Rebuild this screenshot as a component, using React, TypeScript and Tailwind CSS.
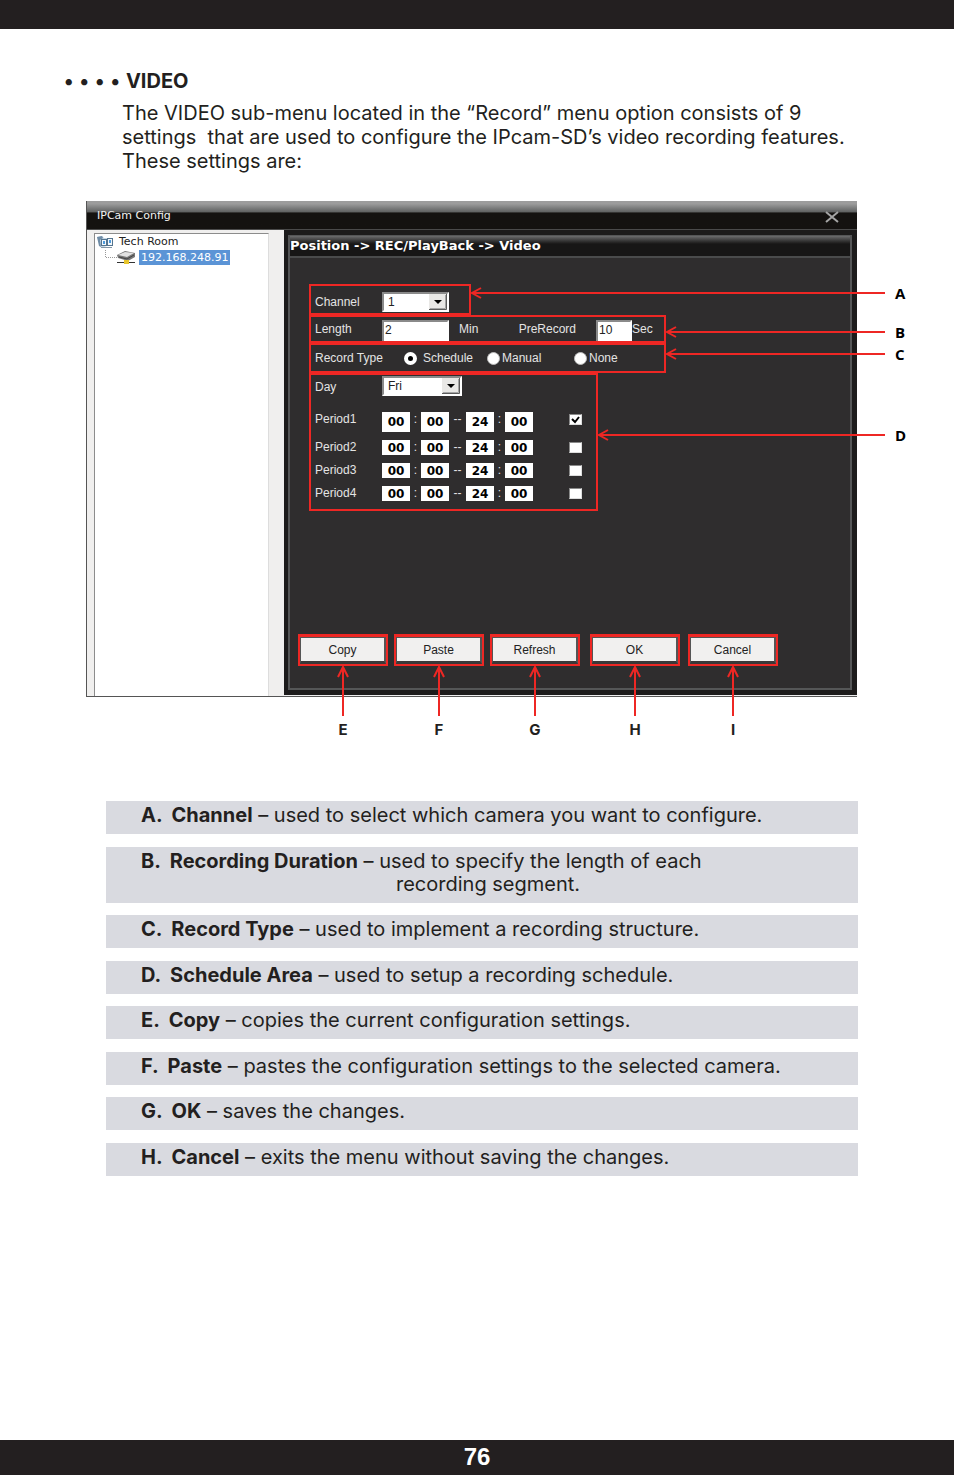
import { ReactNode } from "react";

const periods = [
  { name: "Period1", height: "h-5", checked: true },
  { name: "Period2", height: "h-[15px]", checked: false },
  { name: "Period3", height: "h-[15px]", checked: false },
  { name: "Period4", height: "h-[15px]", checked: false },
];

const legend = [
  {
    title: "A.  Channel",
    text: "used to select which camera you want to configure.",
  },
  {
    title: "B.  Recording Duration",
    text: "used to specify the length of each",
    more: "recording segment.",
  },
  {
    title: "C.  Record Type",
    text: "used to implement a recording structure.",
  },
  {
    title: "D.  Schedule Area",
    text: "used to setup a recording schedule.",
  },
  {
    title: "E.  Copy",
    text: "copies the current configuration settings.",
  },
  {
    title: "F.  Paste",
    text: "pastes the configuration settings to the selected camera.",
  },
  { title: "G.  OK", text: "saves the changes." },
  {
    title: "H.  Cancel",
    text: "exits the menu without saving the changes.",
  },
];

// Horizontal arrow that points back at the box it sits in
function SideCallout({
  letter,
  length,
  className,
}: {
  letter: string;
  length: number;
  className: string;
}) {
  return (
    <div className={`absolute left-full flex items-start gap-2.5 ${className}`}>
      <svg
        width={length}
        height="14"
        className="shrink-0"
        fill="none"
        stroke="#ee2724"
        strokeWidth="2"
      >
        <path d={`M3 7H${length}M12 2L3 7L12 12`} />
      </svg>
      <span className="font-['Open_Sans',sans-serif] text-[15px] leading-[14px] font-bold text-black">
        {letter}
      </span>
    </div>
  );
}

function ActionButton({ label, letter }: { label: string; letter: string }) {
  return (
    <div className="relative w-[90px] border-2 border-t-[3px] border-[#ee2724]">
      <button
        type="button"
        className="block h-[27px] w-full border border-r-2 border-b-[3px] border-[#555] border-b-[#3a3838] bg-[#f1f0ef] text-xs text-[#222]"
      >
        {label}
      </button>
      <div className="absolute top-full left-0 flex w-full flex-col items-center gap-1">
        <svg
          width="14"
          height="52"
          fill="none"
          stroke="#ee2724"
          strokeWidth="2"
        >
          <path d="M7 3V52M2 13L7 3L12 13" />
        </svg>
        <span className="font-[Inter,sans-serif] text-[15px] leading-5 font-bold text-[#231f20]">
          {letter}
        </span>
      </div>
    </div>
  );
}

function Select({
  id,
  value,
  className,
}: {
  id: string;
  value: string;
  className: string;
}) {
  return (
    <div className={`relative h-5 ${className}`}>
      <select
        id={id}
        className="block h-5 w-full appearance-none border-2 border-[#8a8a8a] border-r-white border-b-white bg-white pl-1 text-xs leading-4 text-[#222]"
      >
        <option>{value}</option>
      </select>
      <svg
        width="18"
        height="16"
        className="pointer-events-none absolute top-0.5 right-0.5"
      >
        <rect width="18" height="16" fill="#e9e8e6" />
        <path d="M17.5 0V15.5H0" fill="none" stroke="#5c5c5c" />
        <path d="M16.5 1V14.5H1" fill="none" stroke="#a5a5a5" />
        <path d="M5 6H13L9 10Z" fill="#000" />
      </svg>
    </div>
  );
}

function Radio({ label, checked }: { label: string; checked?: boolean }) {
  return (
    <label className="flex items-center gap-0.5">
      <input
        type="radio"
        name="type"
        defaultChecked={checked}
        className="peer size-[13px] appearance-none rounded-full border border-[#bbb] bg-white checked:border-4 checked:border-white checked:bg-black"
      />
      <span className="peer-checked:pl-1">{label}</span>
    </label>
  );
}

function TimeBox({ label, value }: { label: string; value: string }) {
  return (
    <input
      aria-label={label}
      defaultValue={value}
      className="h-full w-7 bg-white text-center font-['DejaVu_Sans',sans-serif] text-xs leading-4 font-bold text-black"
    />
  );
}

function Box({
  className,
  children,
}: {
  className: string;
  children: ReactNode;
}) {
  return (
    <div className={`relative border-2 border-[#ee2724] pl-1 ${className}`}>
      {children}
    </div>
  );
}

function Sidebar() {
  return (
    <div className="w-[197px] shrink-0 bg-[#f0efee] pt-[3px] pr-[15px] pl-[7px]">
      <div className="h-full border border-b-0 border-[#8c8c8c] border-r-[#ddd] bg-white px-0.5 font-['DejaVu_Sans',sans-serif] text-[11px] text-[#222]">
        <div className="flex h-4 items-center gap-1.5">
          <svg width="16" height="14">
            <path d="M0 2L5 1L7 3H12L13 10L4 13Z" fill="#c5d6e4" />
            <path d="M0 2L5 1L6 3L3 5L4 12L2 11Z" fill="#6f8ca6" />
            <rect x="4.500" y="4.500" width="5" height="6" fill="#f3f8fc" stroke="#55758f" />
            <rect x="10.500" y="3.500" width="5" height="7" fill="#f3f8fc" stroke="#55758f" />
            <path d="M6 6H8V9H6ZM12 5H14V8H12Z" fill="#4d9bdd" />
            <path d="M4 12.500H15" stroke="#8497a6" />
          </svg>
          Tech Room
        </div>
        <div className="flex h-[15px] items-center">
          <svg width="42" height="15">
            <path
              d="M8.500 0V7.500H20"
              fill="none"
              stroke="#999"
              strokeDasharray="1 1"
            />
            <path d="M20 5L28 1L38 3L38 7L31 11L21 8Z" fill="#777" />
            <path d="M21 5L28 2L37 3L30 7Z" fill="#e2e2e2" />
            <path d="M22 7L30 9L37 5" stroke="#444" fill="none" />
            <path d="M20 12.500H38" stroke="#333" />
            <rect x="27" y="10" width="5" height="4" fill="#e7c52c" />
          </svg>
          <span className="bg-[#5b94d6] px-0.5 leading-[15px] text-white">
            192.168.248.91
          </span>
        </div>
      </div>
    </div>
  );
}

function ConfigWindow() {
  return (
    <div className="w-full max-w-[771px] border-b border-l border-[#555] font-['Liberation_Sans',Arial,sans-serif] text-xs">
      <div className="flex h-[29px] items-center justify-between border-b border-[#4a4a4a] bg-linear-to-b from-[#9c9c9c] from-10% via-[#5e6060] via-40% to-[#141210] to-42% pr-[18px] pl-2.5">
        <span className="pt-0.5 font-['DejaVu_Sans',sans-serif] text-[11px] text-[#f2f2f2]">
          IPCam Config
        </span>
        <button type="button" aria-label="Close" className="pt-1">
          <svg width="14" height="12" stroke="#a5a5a5" strokeWidth="2">
            <path d="M1 1L13 11M13 1L1 11" />
          </svg>
        </button>
      </div>
      <div className="flex h-[466px]">
        <Sidebar />
        <div className="flex-1 border-b border-[#eee] bg-[#1c1b1b] pt-[5px] pr-[5px] pb-[5px] pl-1">
          <div className="flex h-full flex-col border-2 border-t border-[#555657] bg-[#2f2d2e]">
            <h2 className="h-[22px] border-b-2 border-[#4a4b4c] bg-linear-to-b from-[#6c6d6e] via-[#171616] via-40% to-[#171616] font-['DejaVu_Sans',sans-serif] text-[13px] leading-5 font-bold text-white">
              Position -&gt; REC/PlayBack -&gt; Video
            </h2>
            <form className="flex flex-1 flex-col justify-between pt-[26px] pr-[70px] pb-[22px] pl-2 text-[#e4e4e4]">
              <div className="ml-[11px]">
                <Box className="flex h-[31px] w-[162px] items-center pt-1">
                  <label htmlFor="channel" className="w-[67px]">
                    Channel
                  </label>
                  <Select id="channel" value="1" className="w-[67px]" />
                  <SideCallout letter="A" length={416} className="top-0" />
                </Box>
                <Box className="flex h-7 w-[357px] items-center">
                  <label htmlFor="length" className="w-[67px]">
                    Length
                  </label>
                  <input
                    id="length"
                    defaultValue="2"
                    className="h-[21px] w-[67px] self-end border-2 border-b-0 border-[#8a8a8a] border-r-white bg-white pb-1 pl-px text-[#222]"
                  />
                  <span className="pl-2.5">Min</span>
                  <label htmlFor="prerecord" className="mr-5 ml-auto">
                    PreRecord
                  </label>
                  <input
                    id="prerecord"
                    defaultValue="10"
                    className="h-[21px] w-9 self-end border-2 border-b-0 border-[#8a8a8a] border-r-white bg-white pb-1 pl-px text-[#222]"
                  />
                  <span className="w-8">Sec</span>
                  <SideCallout letter="B" length={221} className="top-2" />
                </Box>
                <Box className="flex h-[30px] w-[357px] items-center">
                  <span className="w-[89px]">Record Type</span>
                  <div className="flex">
                    <div className="w-[83px]">
                      <Radio label="Schedule" checked />
                    </div>
                    <div className="w-[87px]">
                      <Radio label="Manual" />
                    </div>
                    <Radio label="None" />
                  </div>
                  <SideCallout letter="C" length={221} className="top-0.5" />
                </Box>
                <Box className="w-[289px] pt-px pb-2">
                  <div className="flex items-center">
                    <label htmlFor="day" className="w-[67px] pt-0.5">
                      Day
                    </label>
                    <Select id="day" value="Fri" className="w-20" />
                  </div>
                  <div className="grid gap-2 pt-4">
                    {periods.map((p) => (
                      <div
                        key={p.name}
                        className={`flex items-start leading-[14px] ${p.height}`}
                      >
                        <span className="w-[67px]">{p.name}</span>
                        <TimeBox label={`${p.name} start hour`} value="00" />
                        <span className="w-[11px] text-center">:</span>
                        <TimeBox label={`${p.name} start minute`} value="00" />
                        <span className="w-[17px] text-center">--</span>
                        <TimeBox label={`${p.name} end hour`} value="24" />
                        <span className="w-[11px] text-center">:</span>
                        <TimeBox label={`${p.name} end minute`} value="00" />
                        <div className="relative mt-0.5 ml-9 h-[11px] w-[13px]">
                          <input
                            type="checkbox"
                            aria-label={`${p.name} enabled`}
                            defaultChecked={p.checked}
                            className="peer block h-[11px] w-[13px] appearance-none border border-[#8a8a8a] border-r-[#ddd] border-b-[#ddd] bg-white"
                          />
                          <svg
                            width="13"
                            height="11"
                            fill="none"
                            stroke="#000"
                            strokeWidth="2"
                            className="pointer-events-none absolute inset-0 hidden peer-checked:block"
                          >
                            <path d="M3 5L6 8L10 3" />
                          </svg>
                        </div>
                      </div>
                    ))}
                  </div>
                  <SideCallout
                    letter="D"
                    length={289}
                    className="top-[53px]"
                  />
                </Box>
              </div>
              <div className="flex gap-2.5">
                <div className="flex gap-1.5">
                  <ActionButton label="Copy" letter="E" />
                  <ActionButton label="Paste" letter="F" />
                  <ActionButton label="Refresh" letter="G" />
                </div>
                <div className="flex gap-2">
                  <ActionButton label="OK" letter="H" />
                  <ActionButton label="Cancel" letter="I" />
                </div>
              </div>
            </form>
          </div>
        </div>
      </div>
    </div>
  );
}

export default function App() {
  return (
    <div className="flex min-h-screen flex-col bg-white font-[Inter,sans-serif] text-[#231f20]">
      <header className="h-[29px] bg-[#231f20]" />
      <main className="flex-1 pt-10 pr-24 pl-[86px]">
        <h1 className="-ml-[22px] flex gap-1.5 text-xl leading-6 font-bold">
          <span>•</span>
          <span>•</span>
          <span>•</span>
          <span>•</span>
          <span>VIDEO</span>
        </h1>
        <p className="-mr-8 pt-2 pb-7 pl-9 text-xl leading-6">
          The VIDEO sub-menu located in the “Record” menu option consists of 9
          <br />
          settings&nbsp; that are used to configure the IPcam-SD’s video
          recording features.
          <br />
          These settings are:
        </p>
        <ConfigWindow />
        <ul className="mt-[104px] ml-5 grid min-h-[375px] content-between">
          {legend.map((item) => (
            <li
              key={item.title}
              className="bg-[#d9dae0] pt-[3px] pb-[7px] pl-[35px] text-xl leading-[23px]"
            >
              <span className="font-bold whitespace-pre">{item.title}</span> –{" "}
              {item.text}
              {item.more && (
                <span className="block pl-[255px]">{item.more}</span>
              )}
            </li>
          ))}
        </ul>
      </main>
      <footer className="h-[35px] bg-[#231f20] text-center font-['Liberation_Sans',Arial,sans-serif] text-2xl leading-[34px] font-bold text-white">
        76
      </footer>
    </div>
  );
}
